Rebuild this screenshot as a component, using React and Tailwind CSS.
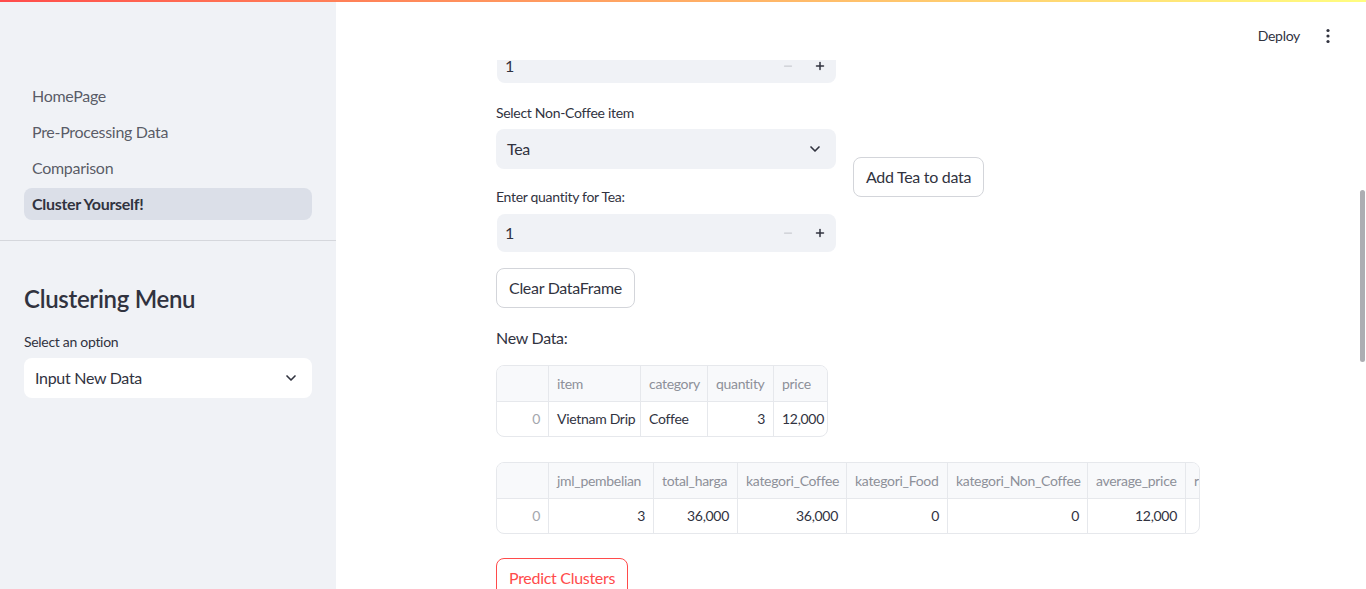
import { ChevronDown, Minus, Plus } from "lucide-react";

const font = { fontFamily: "Lato, 'Liberation Sans', sans-serif" };

function NumberInput({ clipped }) {
  return (
    <div
      className={
        "flex w-[339px] ml-px bg-[#f0f2f6] " +
        (clipped ? "h-[23px] rounded-b-lg items-start" : "h-[38px] rounded-lg items-center")
      }
    >
      <div className={"flex-1 pl-2 text-base text-[#31333f] " + (clipped ? "leading-[12px]" : "")}>1</div>
      <div className={"flex items-center " + (clipped ? "h-[12px]" : "")}>
        <span className="w-8 flex justify-center text-[#c9cbd1]">
          <Minus size={12} strokeWidth={2.5} />
        </span>
        <span className="w-8 flex justify-center text-[#31333f]">
          <Plus size={12} strokeWidth={3} />
        </span>
      </div>
    </div>
  );
}

function Button({ children, className = "", danger }) {
  return (
    <button
      className={
        "h-10 px-3 rounded-lg border bg-white text-base whitespace-nowrap " +
        (danger ? "border-[#ff4b4b] text-[#ff4b4b] " : "border-[#d3d5da] text-[#31333f] ") +
        className
      }
    >
      {children}
    </button>
  );
}

function DataTable({ columns, row, width }) {
  return (
    <div className={"border border-[#e6e8ec] rounded-lg overflow-hidden " + width}>
      <div className="flex h-[36px] bg-[#f8f9fb] border-b border-[#e6e8ec] text-sm text-[#8d9099]">
        {columns.map((c, i) => (
          <div
            key={i}
            className={
              "flex items-center px-2 shrink-0 whitespace-nowrap overflow-hidden " +
              (i > 0 ? "border-l border-[#e6e8ec]" : "")
            }
            style={{ width: c.w }}
          >
            {c.label}
          </div>
        ))}
      </div>
      <div className="flex h-[34px] text-sm text-[#31333f]">
        {columns.map((c, i) => (
          <div
            key={i}
            className={
              "flex items-center px-2 shrink-0 whitespace-nowrap overflow-hidden " +
              (i > 0 ? "border-l border-[#e6e8ec] " : "text-[#a3a6ad] ") +
              (c.right ? "justify-end" : "justify-start")
            }
            style={{ width: c.w }}
          >
            {row[i]}
          </div>
        ))}
      </div>
    </div>
  );
}

export default function App() {
  const table1 = [
    { label: "", w: 51, right: true },
    { label: "item", w: 92 },
    { label: "category", w: 67 },
    { label: "quantity", w: 66, right: true },
    { label: "price", w: 56 },
  ];
  const table2 = [
    { label: "", w: 51, right: true },
    { label: "jml_pembelian", w: 105, right: true },
    { label: "total_harga", w: 84, right: true },
    { label: "kategori_Coffee", w: 109, right: true },
    { label: "kategori_Food", w: 101, right: true },
    { label: "kategori_Non_Coffee", w: 140, right: true },
    { label: "average_price", w: 98, right: true },
    { label: "rata_rata_item", w: 110, right: true },
  ];

  return (
    <div
      className="relative flex w-[1366px] h-[589px] overflow-hidden bg-white tracking-[-0.3px]"
      style={font}
    >
      <div className="absolute top-0 left-0 right-0 h-[2px] bg-gradient-to-r from-[#ff4b4b] to-[#fffd80] z-10" />

      {/* sidebar */}
      <aside className="w-[336px] shrink-0 bg-[#f0f2f6] flex flex-col">
        <nav className="px-6 pt-[80px] flex flex-col gap-1">
          {["HomePage", "Pre-Processing Data", "Comparison"].map((t) => (
            <div key={t} className="h-8 px-2 flex items-center text-base text-[#31333f]/80">
              {t}
            </div>
          ))}
          <div className="h-8 px-2 flex items-center rounded-lg bg-[#dbdfe8] text-base font-bold text-[#31333f]">
            Cluster Yourself!
          </div>
        </nav>
        <div className="mt-5 border-b border-[#d5d7dc]" />
        <div className="px-6 pt-[42px]">
          <h2 className="text-2xl leading-8 font-semibold text-[#31333f]">Clustering Menu</h2>
          <div className="mt-[17px] text-sm leading-5 text-[#31333f]">Select an option</div>
          <div className="mt-[6px] h-10 bg-white rounded-lg flex items-center justify-between pl-[11px] pr-[13px] text-base text-[#31333f]">
            <span>Input New Data</span>
            <ChevronDown size={16} strokeWidth={2.5} />
          </div>
        </div>
      </aside>

      {/* main */}
      <main className="relative flex-1 flex flex-col">
        <header className="h-[60px] shrink-0 flex items-center justify-end pt-3 pr-[30px] gap-5 text-sm text-[#31333f]">
          <span>Deploy</span>
          <svg width="16" height="16" viewBox="0 0 16 16" fill="#31333f">
            <circle cx="8" cy="2.5" r="1.6" />
            <circle cx="8" cy="8" r="1.6" />
            <circle cx="8" cy="13.5" r="1.6" />
          </svg>
        </header>

        <div className="pl-[160px] w-[864px] shrink-0 flex flex-col items-start">
          <NumberInput clipped />

          <div className="mt-5 flex items-center gap-[17px]">
            <div className="w-[340px] flex flex-col">
              <div className="text-sm leading-5 text-[#31333f]">Select Non-Coffee item</div>
              <div className="mt-[6px] h-10 bg-[#f0f2f6] rounded-lg flex items-center justify-between pl-[11px] pr-[13px] text-base text-[#31333f]">
                <span>Tea</span>
                <ChevronDown size={16} strokeWidth={2.5} />
              </div>
              <div className="mt-[18px] text-sm leading-5 text-[#31333f]">Enter quantity for Tea:</div>
              <div className="mt-[7px]">
                <NumberInput />
              </div>
            </div>
            <Button className="-mt-px">Add Tea to data</Button>
          </div>

          <Button className="mt-4">Clear DataFrame</Button>

          <div className="mt-[18px] text-base leading-6 text-[#31333f]">New Data:</div>

          <div className="mt-[15px]">
            <DataTable columns={table1} row={["0", "Vietnam Drip", "Coffee", "3", "12,000"]} width="w-[332px]" />
          </div>

          <div className="mt-[25px]">
            <DataTable
              columns={table2}
              row={["0", "3", "36,000", "36,000", "0", "0", "12,000", "12,000"]}
              width="w-[704px]"
            />
          </div>

          <Button danger className="mt-6">Predict Clusters</Button>
        </div>

        <div className="absolute right-[1px] top-[190px] w-[5px] h-[172px] rounded-full bg-[#adadb2]" />
      </main>
    </div>
  );
}
